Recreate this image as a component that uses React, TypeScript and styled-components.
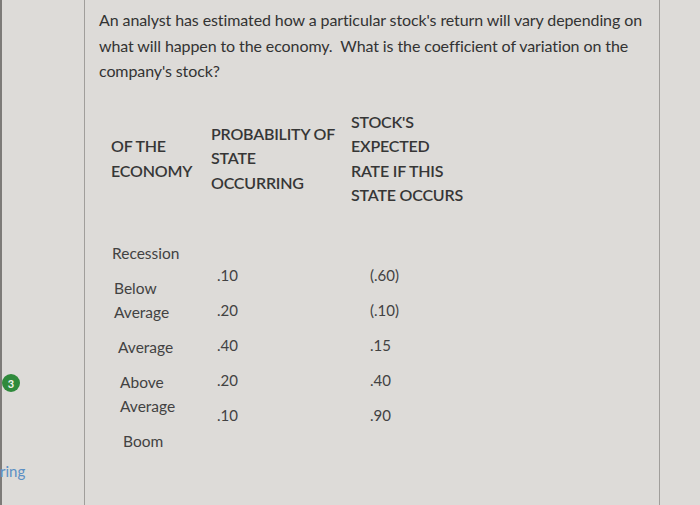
import React from "react";
import styled, { createGlobalStyle } from "styled-components";

// the states and what the stock does in each one
const states = [
  { lines: ["Recession"], shift: 0 },
  { lines: ["Below", "Average"], shift: 2 },
  { lines: ["Average"], shift: 6 },
  { lines: ["Above", "Average"], shift: 8 },
  { lines: ["Boom"], shift: 11 },
];

const probabilities = [".10", ".20", ".40", ".20", ".10"];
const returns = ["(.60)", "(.10)", ".15", ".40", ".90"];

const GlobalStyle = createGlobalStyle`
  html, body {
    margin: 0;
    padding: 0;
    background: #dddbd8;
  }
  body {
    font-family: Lato, "Liberation Sans", sans-serif;
    color: #3a3a3a;
    width: 700px;
    height: 505px;
    overflow: hidden;
  }
`;

export default function App() {
  return (
    <>
      <GlobalStyle />
      <Page>
        <Sidebar>
          <StepBadge>3</StepBadge>
          <SideLink>ring</SideLink>
        </Sidebar>

        <Card>
          <Question>
            An analyst has estimated how a particular stock's return will vary depending on
            <br />
            what will happen to the economy.&nbsp; What is the coefficient of variation on the
            <br />
            company's stock?
          </Question>

          <TableHead>
            <HeadCell $indent={12}>
              OF THE
              <br />
              ECONOMY
            </HeadCell>
            <HeadCell>
              PROBABILITY OF
              <br />
              STATE
              <br />
              OCCURRING
            </HeadCell>
            <HeadCell>
              STOCK'S
              <br />
              EXPECTED
              <br />
              RATE IF THIS
              <br />
              STATE OCCURS
            </HeadCell>
          </TableHead>

          <TableBody>
            <EconColumn>
              {states.map((s, i) => (
                <EconItem key={i} $shift={s.shift}>
                  {s.lines.map((l, j) => (
                    <div key={j}>{l}</div>
                  ))}
                </EconItem>
              ))}
            </EconColumn>
            <ValueColumn $indent={6}>
              {probabilities.map((p, i) => (
                <Value key={i}>{p}</Value>
              ))}
            </ValueColumn>
            <ValueColumn $indent={16}>
              {returns.map((r, i) => (
                <Value key={i}>{r}</Value>
              ))}
            </ValueColumn>
          </TableBody>
        </Card>
      </Page>
    </>
  );
}

const Page = styled.div`
  display: flex;
  height: 505px;
`;

/////// left rail of the quiz page (partly cut off) ///////
const Sidebar = styled.aside`
  width: 84px;
  flex-shrink: 0;
  border-left: 2px solid #7d7b78;
  box-sizing: border-box;
  display: flex;
  flex-direction: column;
  padding-top: 374px;
`;

const StepBadge = styled.span`
  width: 18px;
  height: 18px;
  border-radius: 50%;
  background: #2f8a3c;
  color: #f4f4f0;
  font-size: 11px;
  font-weight: 700;
  display: flex;
  align-items: center;
  justify-content: center;
`;

const SideLink = styled.span`
  margin-top: 70px;
  margin-left: -2px;
  font-size: 15px;
  color: #5b8fc4;
`;

/////// question card ///////
const Card = styled.main`
  width: 576px;
  border-left: 1px solid #a09e9b;
  border-right: 1px solid #a09e9b;
  padding: 7px 0 0 14px;
  box-sizing: border-box;
`;

const Question = styled.p`
  margin: 0;
  font-size: 16px;
  line-height: 25.5px;
  color: #333333;
  letter-spacing: -0.1px;
`;

const TableHead = styled.div`
  display: grid;
  grid-template-columns: 112px 140px 1fr;
  align-items: center;
  margin-top: 26px;
`;

const HeadCell = styled.div<{ $indent?: number }>`
  font-size: 16px;
  font-weight: 600;
  line-height: 24.5px;
  color: #363636;
  letter-spacing: -0.2px;
  padding-left: ${(p) => p.$indent ?? 0}px;
`;

const TableBody = styled.div`
  display: grid;
  grid-template-columns: 105px 150px 1fr;
  margin-top: 33px;
  padding-left: 13px;
`;

const EconColumn = styled.div`
  display: flex;
  flex-direction: column;
  gap: 11px;
`;

const EconItem = styled.div<{ $shift: number }>`
  font-size: 15.5px;
  line-height: 24px;
  color: #424242;
  padding-left: ${(p) => p.$shift}px;
`;

const ValueColumn = styled.div<{ $indent: number }>`
  display: flex;
  flex-direction: column;
  gap: 11px;
  padding-top: 22px;
  padding-left: ${(p) => p.$indent - 13}px;
`;

const Value = styled.div`
  font-size: 15px;
  line-height: 24px;
  color: #424242;
`;
